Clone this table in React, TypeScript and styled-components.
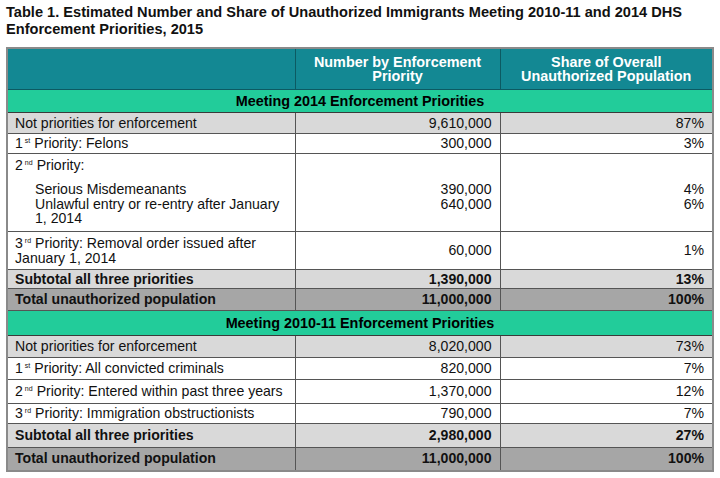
import styled, { createGlobalStyle } from 'styled-components'

const GlobalStyle = createGlobalStyle`
  body {
    margin: 0;
    background: #ffffff;
    font-family: "Liberation Sans", Arial, sans-serif;
    color: #000;
  }
`

type Row = {
  label: React.ReactNode
  number: string
  share: string
  kind?: 'plain' | 'light' | 'sub' | 'total'
  height: number
}

const Sup = styled.span`
  display: inline-block;
  font-size: 7px;
  line-height: 7px;
  vertical-align: top;
  margin: 1px 4px 0 2px;
`

const Ord = ({ n, s }: { n: string; s: string }) => (
  <>
    {n}
    <Sup>{s}</Sup>
  </>
)

const Page = styled.div`
  padding: 4px 6px 0 6px;
  width: 708px;
`

const Title = styled.h1`
  margin: 0 0 9px 0;
  font-size: 14.6px;
  line-height: 17px;
  font-weight: bold;
  color: #111;
`

const Table = styled.table`
  width: 706px;
  border-collapse: collapse;
  table-layout: fixed;
  border: 2px solid #8a8a8a;
  font-size: 14.1px;
  line-height: 15px;
`

const HeadCell = styled.th`
  background: #138893;
  color: #fff;
  font-weight: bold;
  font-size: 14.4px;
  line-height: 14px;
  text-align: center;
  border: 1px solid #0c5a62;
  height: 40px;
  padding: 0 10px;
`

const SectionCell = styled.td`
  background: #22cc9a;
  border: 1px solid #3a3a3a;
  font-weight: bold;
  font-size: 14.4px;
  text-align: center;
  padding: 0;
`

const bg = { plain: '#ffffff', light: '#d9d9d9', sub: '#d9d9d9', total: '#a6a6a6' }

const Tr = styled.tr<{ $kind: keyof typeof bg; $h: number }>`
  background: ${p => bg[p.$kind]};
  height: ${p => p.$h}px;
  font-weight: ${p => (p.$kind === 'sub' || p.$kind === 'total' ? 'bold' : 'normal')};
`

const Cell = styled.td<{ $right?: boolean; $top?: number }>`
  border: 1px solid #555;
  padding: ${p => (p.$top != null ? `${p.$top}px` : '0')} 8px 0 7px;
  text-align: ${p => (p.$right ? 'right' : 'left')};
  vertical-align: ${p => (p.$top != null ? 'top' : 'middle')};
  color: #111;
`

const SubList = styled.div`
  margin-top: 9px;
  padding-left: 20px;
  line-height: 14.5px;
`

const Line = styled.span`
  display: block;
`

const section2014: Row[] = [
  { label: 'Not priorities for enforcement', number: '9,610,000', share: '87%', kind: 'light', height: 21 },
  { label: <><Ord n="1" s="st" />Priority: Felons</>, number: '300,000', share: '3%', kind: 'plain', height: 20 },
]

const section2014b: Row[] = [
  {
    label: (
      <>
        <Line><Ord n="3" s="rd" />Priority: Removal order issued after</Line>
        <Line>January 1, 2014</Line>
      </>
    ),
    number: '60,000', share: '1%', kind: 'plain', height: 38,
  },
  { label: 'Subtotal all three priorities', number: '1,390,000', share: '13%', kind: 'sub', height: 19 },
  { label: 'Total unauthorized population', number: '11,000,000', share: '100%', kind: 'total', height: 22 },
]

const section2010: Row[] = [
  { label: 'Not priorities for enforcement', number: '8,020,000', share: '73%', kind: 'light', height: 22 },
  { label: <><Ord n="1" s="st" />Priority: All convicted criminals</>, number: '820,000', share: '7%', kind: 'plain', height: 22 },
  { label: <><Ord n="2" s="nd" />Priority: Entered within past three years</>, number: '1,370,000', share: '12%', kind: 'plain', height: 24 },
  { label: <><Ord n="3" s="rd" />Priority: Immigration obstructionists</>, number: '790,000', share: '7%', kind: 'plain', height: 20 },
  { label: 'Subtotal all three priorities', number: '2,980,000', share: '27%', kind: 'sub', height: 24 },
  { label: 'Total unauthorized population', number: '11,000,000', share: '100%', kind: 'total', height: 23 },
]

const renderRows = (rows: Row[]) =>
  rows.map((r, i) => (
    <Tr key={i} $kind={r.kind ?? 'plain'} $h={r.height}>
      <Cell>{r.label}</Cell>
      <Cell $right>{r.number}</Cell>
      <Cell $right>{r.share}</Cell>
    </Tr>
  ))

export default function App() {
  return (
    <Page>
      <GlobalStyle />
      <Title>
        Table 1. Estimated Number and Share of Unauthorized Immigrants Meeting 2010-11 and 2014 DHS
        Enforcement Priorities, 2015
      </Title>
      <Table>
        <colgroup>
          <col style={{ width: 288 }} />
          <col style={{ width: 205 }} />
          <col style={{ width: 213 }} />
        </colgroup>
        <thead>
          <tr>
            <HeadCell></HeadCell>
            <HeadCell>Number by Enforcement Priority</HeadCell>
            <HeadCell>Share of Overall Unauthorized Population</HeadCell>
          </tr>
        </thead>
        <tbody>
          <tr style={{ height: 23 }}>
            <SectionCell colSpan={3}>Meeting 2014 Enforcement Priorities</SectionCell>
          </tr>
          {renderRows(section2014)}
          <Tr $kind="plain" $h={78}>
            <Cell $top={4}>
              <Ord n="2" s="nd" />Priority:
              <SubList>
                <Line>Serious Misdemeanants</Line>
                <Line>Unlawful entry or re-entry after January</Line>
                <Line>1, 2014</Line>
              </SubList>
            </Cell>
            <Cell $right $top={28}>
              390,000
              <br />
              640,000
            </Cell>
            <Cell $right $top={28}>
              4%
              <br />
              6%
            </Cell>
          </Tr>
          {renderRows(section2014b)}
          <tr style={{ height: 25 }}>
            <SectionCell colSpan={3}>Meeting 2010-11 Enforcement Priorities</SectionCell>
          </tr>
          {renderRows(section2010)}
        </tbody>
      </Table>
    </Page>
  )
}
